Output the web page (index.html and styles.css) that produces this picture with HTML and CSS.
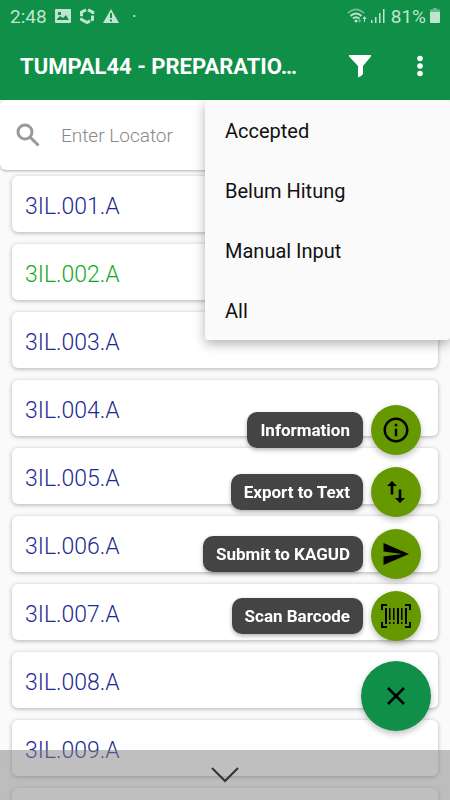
FILE: index.html
```html
<!DOCTYPE html>
<html lang="id">
    <head>
        <meta charset="utf-8">
        <meta name="viewport" content="width=device-width, initial-scale=1">
        <title>TUMPAL44 - PREPARATION</title>
        <link rel="stylesheet" href="styles.css">
    </head>
    <body>
        <header class="header">
            <div class="status">
                <span>2:48</span>
                <svg class="status-icon" viewBox="0 0 16 16"><path fill-rule="evenodd" d="M1 1h14q1 0 1 1v12q0 1-1 1H1q-1 0-1-1V2q0-1 1-1zM2 12h12l-3-5-3 3-3-2-3 3zM3 4v3h3V4z"/></svg>
                <svg class="status-icon" viewBox="0 0 16 16"><path class="ring" d="M7 1.800 2.500 4.200v4M2.200 10l.3 1.500L8 14.500l3-1.600M12 12.300l1.500-.8V7.500M13.800 6V4.200L9 1.800"/></svg>
                <svg class="status-icon" viewBox="0 0 16 16"><path fill-rule="evenodd" d="M8 1l8 14H0zM7 5v5h2V5zM7 11.500v2h2v-2z"/></svg>
                <span class="status-dot">·</span>
                <svg class="wifi" viewBox="0 0 20 16"><path class="arc faint" d="M1 5q8-7 16 0"/><path class="arc" d="M3.500 8q5.500-5 11 0M6 10.500q3-2.500 6 0"/><circle cx="9" cy="13" r="1.500"/><path class="faint-fill" d="M12 9h1v3h1.500L12.500 15l-2-3H12z"/><path d="M17 14h1v-3h1.500L17.500 8l-2 3H17z"/></svg>
                <svg class="signal" viewBox="0 0 14 16"><path d="M0 12h1.500v3H0zM4 9h1.500v6H4zM8 5h1.500v10H8zM12 1h1.500v14H12z"/></svg>
                <span>81%</span>
                <svg class="battery" viewBox="0 0 10 16"><path d="M3 0h4v1.500h3V4H0V1.500h3z" opacity=".5"/><path d="M0 4h10v10q0 1-1 1H1q-1 0-1-1z"/></svg>
            </div>
            <div class="toolbar">
                <h1 class="title">TUMPAL44 - PREPARATIO…</h1>
                <button type="button" class="tool" aria-label="Filter">
                    <svg width="24" height="24" viewBox="0 0 24 24"><path d="M1 1h22q.5 1-.5 2L15 12v8q-2 3-5 3.500V12L1.500 3Q.500 2 1 1z"/></svg>
                </button>
                <button type="button" class="tool" aria-label="Menu">
                    <svg width="24" height="24" viewBox="0 0 24 24"><circle cx="12" cy="4.500" r="2.800"/><circle cx="12" cy="12" r="2.800"/><circle cx="12" cy="19.500" r="2.800"/></svg>
                </button>
            </div>
        </header>

        <main class="content">
            <label class="search">
                <svg width="24" height="24" viewBox="0 0 24 24"><circle cx="9" cy="9" r="7"/><path d="M14 14l8.500 8.500"/></svg>
                <input type="text" name="locator" placeholder="Enter Locator" aria-label="Enter Locator">
            </label>

            <ul class="list">
                <li class="card">3IL.001.A</li>
                <li class="card done">3IL.002.A</li>
                <li class="card">3IL.003.A</li>
                <li class="card">3IL.004.A</li>
                <li class="card">3IL.005.A</li>
                <li class="card">3IL.006.A</li>
                <li class="card">3IL.007.A</li>
                <li class="card">3IL.008.A</li>
                <li class="card">3IL.009.A</li>
                <li class="card"></li>
            </ul>

            <!-- filter menu -->
            <div class="menu">
                <button type="button">Accepted</button>
                <button type="button">Belum Hitung</button>
                <button type="button">Manual Input</button>
                <button type="button">All</button>
            </div>
        </main>

        <!-- floating actions -->
        <div class="actions">
            <div class="action">
                <label class="tag" for="info">Information</label>
                <button type="button" class="fab" id="info">
                    <svg width="30" height="30" viewBox="0 0 24 24"><path d="M11 7h2v2h-2zm0 4h2v6h-2zm1-9C6.480 2 2 6.480 2 12s4.480 10 10 10 10-4.480 10-10S17.520 2 12 2zm0 18c-4.410 0-8-3.590-8-8s3.590-8 8-8 8 3.590 8 8-3.590 8-8 8z"/></svg>
                </button>
            </div>
            <div class="action">
                <label class="tag" for="export">Export to Text</label>
                <button type="button" class="fab" id="export">
                    <svg width="30" height="30" viewBox="0 0 30 30"><path d="M11 4l5 5h-3.700v8.500H9.700V9H6zM17.700 12.500h2.600V21H24l-5 5-5-5h3.700z"/></svg>
                </button>
            </div>
            <div class="action">
                <label class="tag" for="submit">Submit to KAGUD</label>
                <button type="button" class="fab" id="submit">
                    <svg width="30" height="30" viewBox="0 0 30 30"><path d="M2.500 4 28 15 2.500 26v-8.500L21 15 2.500 12.500z"/></svg>
                </button>
            </div>
            <div class="action">
                <label class="tag" for="scan">Scan Barcode</label>
                <button type="button" class="fab" id="scan">
                    <svg width="30" height="30" viewBox="0 0 30 30"><path d="M0 3h6v2H2v4H0zM24 3h6v6h-2V5h-4zM0 21h2v4h4v2H0zM28 21h2v6h-6v-2h4zM4 7h2v16H4zM8 7h1.500v12H8zM12 7h1.500v12H12zM16 7h2v16h-2zM20 7h1.500v12H20zM24 7h2v16h-2zM8 21h1.500v2H8zM12 21h1.500v2H12zM20 21h1.500v2H20z"/></svg>
                </button>
            </div>
            <button type="button" class="fab main" aria-label="Close">
                <svg width="30" height="30" viewBox="0 0 30 30"><path d="M7 7l16 16M23 7 7 23"/></svg>
            </button>
        </div>

        <nav class="navbar">
            <button type="button" aria-label="Hide">
                <svg width="28" height="16" viewBox="0 0 28 16"><path d="M1 1l13 13L27 1"/></svg>
            </button>
        </nav>
    </body>
</html>
```
FILE: styles.css
```css
* {
    box-sizing: border-box;
}
body {
    display: flex;
    flex-direction: column;
    margin: 0;
    height: 100vh;
    overflow: hidden;
    background: #fafafa;
    font-family: Roboto, "Liberation Sans", sans-serif;
}
button {
    border: 0;
    padding: 0;
    background: none;
    font: inherit;
    color: inherit;
}
svg {
    display: block;
    flex: none;
}

/* header */
.header {
    flex: none;
    background: #0f8f48;
    color: #fff;
}
.status {
    display: flex;
    align-items: center;
    height: 32px;
    padding: 0 10px;
    font-size: 19px;
    color: #bfe6cc;
}
.status svg {
    fill: #bfe6cc;
}
.status-icon {
    width: 16px;
    height: 16px;
    margin-left: 8px;
}
.status .ring {
    fill: none;
    stroke: #bfe6cc;
    stroke-width: 3;
}
.status-dot {
    margin-left: 13px;
    margin-right: auto;
}
.wifi {
    width: 20px;
    height: 16px;
}
.wifi .arc {
    fill: none;
    stroke: #bfe6cc;
    stroke-width: 2;
}
.wifi .faint,
.wifi .faint-fill {
    opacity: .5;
}
.signal {
    width: 14px;
    height: 16px;
    margin: 0 6px 0 4px;
}
.battery {
    width: 10px;
    height: 16px;
    margin-left: 4px;
}
.toolbar {
    display: flex;
    align-items: center;
    height: 68px;
    padding-left: 20px;
}
.title {
    flex: 1;
    min-width: 0;
    margin: 0 20px 0 0;
    overflow: hidden;
    white-space: nowrap;
    text-overflow: ellipsis;
    font-size: 22px;
    font-weight: 700;
}
.tool {
    display: flex;
    align-items: center;
    justify-content: center;
    width: 60px;
    height: 60px;
}
.tool svg {
    fill: #fff;
}

/* locator list */
.content {
    position: relative;
    flex: 1;
    min-height: 0;
    overflow: hidden;
}
.search {
    display: flex;
    align-items: center;
    gap: 21px;
    height: 70px;
    padding: 0 16px;
    background: #fff;
    border-radius: 6px;
    box-shadow: 0 1px 3px rgba(0, 0, 0, .3);
}
.search svg {
    fill: none;
    stroke: #999;
    stroke-width: 3;
}
.search input {
    flex: 1;
    min-width: 0;
    border: 0;
    padding: 0;
    outline: none;
    background: none;
    font: inherit;
    font-size: 19px;
    font-weight: 300;
}
.search input::placeholder {
    color: #888;
}
.list {
    display: flex;
    flex-direction: column;
    gap: 12px;
    margin: 0;
    padding: 6px 12px;
    list-style: none;
}
.card {
    height: 56px;
    padding: 0 13px;
    background: #fff;
    border-radius: 6px;
    box-shadow: 0 1px 4px rgba(0, 0, 0, .3);
    font-size: 23px;
    font-weight: 300;
    line-height: 62px;
    color: #1c2a94;
}
.card.done {
    color: #12aa1c;
}
.menu {
    position: absolute;
    top: 0;
    right: 0;
    display: flex;
    flex-direction: column;
    width: 245px;
    background: #fafafa;
    border-radius: 3px;
    box-shadow: 0 4px 12px rgba(0, 0, 0, .3);
}
.menu button {
    height: 60px;
    padding: 2px 20px 0;
    text-align: left;
    font-size: 20px;
    color: #111;
}

/* floating buttons */
.actions {
    position: fixed;
    right: 19px;
    bottom: 69px;
    display: flex;
    flex-direction: column;
    align-items: flex-end;
    gap: 12px;
}
.action {
    display: flex;
    align-items: center;
    gap: 8px;
    padding-right: 10px;
}
.tag {
    height: 36px;
    padding: 0 13px;
    background: #444;
    border-radius: 10px;
    box-shadow: 0 2px 4px rgba(0, 0, 0, .3);
    font-size: 17px;
    font-weight: 700;
    line-height: 36px;
    color: #fff;
}
.fab {
    display: flex;
    align-items: center;
    justify-content: center;
    width: 50px;
    height: 50px;
    border-radius: 50%;
    background: #669900;
    box-shadow: 0 3px 6px rgba(0, 0, 0, .25);
}
.fab.main {
    width: 70px;
    height: 70px;
    margin-top: 8px;
    background: #0f8f48;
}
.fab.main svg {
    stroke: #000;
    stroke-width: 2.5;
}

.navbar {
    position: fixed;
    left: 0;
    right: 0;
    bottom: 0;
    display: flex;
    align-items: center;
    justify-content: center;
    height: 50px;
    background: rgba(128, 128, 128, .5);
}
.navbar svg {
    fill: none;
    stroke: #333;
    stroke-width: 2;
}
```
